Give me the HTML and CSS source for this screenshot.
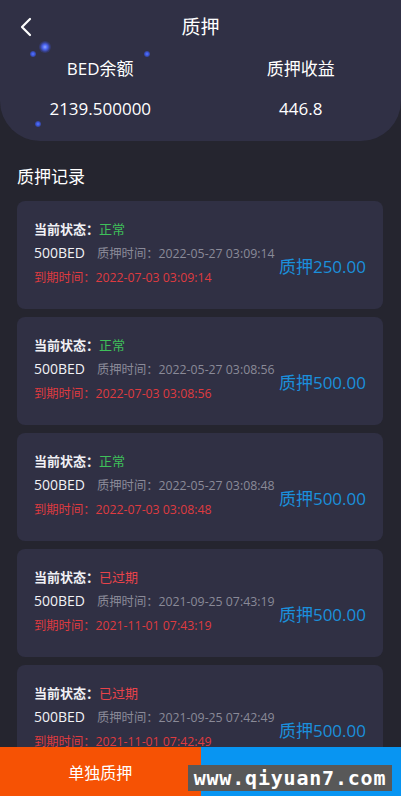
FILE: index.html
```html
<!DOCTYPE html>
<html lang="zh">
<head>
<meta charset="utf-8">
<title>质押</title>
<link rel="stylesheet" href="styles.css">
</head>
<body>
<div class="page">
  <header class="header">
    <span class="star star-big s1"></span>
    <span class="star s2"></span>
    <span class="star s3"></span>
    <span class="star s4"></span>
    <div class="topbar">
      <svg class="back" width="14" height="20" viewBox="0 0 14 20"><path d="M11 2 L3 10 L11 18" fill="none" stroke="#fff" stroke-width="2.2" stroke-linecap="round" stroke-linejoin="round"/></svg>
      <h1 class="title">质押</h1>
    </div>
    <div class="stats">
      <div class="stat">
        <div class="stat-label">BED余额</div>
        <div class="stat-value">2139.500000</div>
      </div>
      <div class="stat">
        <div class="stat-label">质押收益</div>
        <div class="stat-value">446.8</div>
      </div>
    </div>
  </header>

  <h2 class="section-title">质押记录</h2>

  <div class="list">
    <div class="card">
      <div class="info">
        <div class="line status">当前状态：<span class="ok">正常</span></div>
        <div class="line"><span class="qty">500BED</span><span class="time">质押时间：2022-05-27 03:09:14</span></div>
        <div class="line expire">到期时间：2022-07-03 03:09:14</div>
      </div>
      <div class="amount">质押250.00</div>
    </div>
    <div class="card">
      <div class="info">
        <div class="line status">当前状态：<span class="ok">正常</span></div>
        <div class="line"><span class="qty">500BED</span><span class="time">质押时间：2022-05-27 03:08:56</span></div>
        <div class="line expire">到期时间：2022-07-03 03:08:56</div>
      </div>
      <div class="amount">质押500.00</div>
    </div>
    <div class="card">
      <div class="info">
        <div class="line status">当前状态：<span class="ok">正常</span></div>
        <div class="line"><span class="qty">500BED</span><span class="time">质押时间：2022-05-27 03:08:48</span></div>
        <div class="line expire">到期时间：2022-07-03 03:08:48</div>
      </div>
      <div class="amount">质押500.00</div>
    </div>
    <div class="card">
      <div class="info">
        <div class="line status">当前状态：<span class="bad">已过期</span></div>
        <div class="line"><span class="qty">500BED</span><span class="time">质押时间：2021-09-25 07:43:19</span></div>
        <div class="line expire">到期时间：2021-11-01 07:43:19</div>
      </div>
      <div class="amount">质押500.00</div>
    </div>
    <div class="card">
      <div class="info">
        <div class="line status">当前状态：<span class="bad">已过期</span></div>
        <div class="line"><span class="qty">500BED</span><span class="time">质押时间：2021-09-25 07:42:49</span></div>
        <div class="line expire">到期时间：2021-11-01 07:42:49</div>
      </div>
      <div class="amount">质押500.00</div>
    </div>
  </div>

  <footer class="bottom">
    <button class="btn btn-orange">单独质押</button>
    <button class="btn btn-blue"></button>
  </footer>
  <div class="watermark">www.qiyuan7.com</div>
</div>
</body>
</html>
```

FILE: styles.css
```css
* { box-sizing: border-box; }
html, body {
  margin: 0;
  padding: 0;
  background: #25252f;
  font-family: "Open Sans", "Noto Sans CJK SC", sans-serif;
  color: #fff;
}
.page {
  width: 401px;
  height: 796px;
  overflow: hidden;
  position: relative;
}
.header {
  position: relative;
  height: 141px;
  background: #303045;
  border-radius: 0 0 40px 40px;
}
.star {
  position: absolute;
  width: 6px;
  height: 6px;
  border-radius: 50%;
  background: radial-gradient(circle, #5a78ff 0%, #3b55d8 40%, rgba(59,85,216,0) 100%);
}
.star-big {
  width: 12px;
  height: 12px;
  background: radial-gradient(circle, #8fa6ff 0%, #4a63f0 30%, rgba(60,80,220,0.3) 60%, rgba(60,80,220,0) 100%);
}
.s1 { left: 39px; top: 41px; }
.s2 { left: 30px; top: 51px; }
.s3 { left: 144px; top: 51px; }
.s4 { left: 35px; top: 121px; }
.topbar {
  height: 54px;
  display: flex;
  align-items: center;
  justify-content: center;
  position: relative;
}
.back {
  position: absolute;
  left: 19px;
  top: 17px;
}
.title {
  margin: 0;
  font-size: 19px;
  font-weight: 400;
  line-height: 24px;
  margin-top: -1px;
}
.stats {
  display: grid;
  grid-template-columns: 1fr 1fr;
}
.stat {
  display: flex;
  flex-direction: column;
  align-items: center;
}
.stat-label {
  font-size: 17px;
  line-height: 24px;
  margin-top: 3px;
}
.stat-value {
  font-size: 17px;
  line-height: 24px;
  margin-top: 16px;
}
.section-title {
  margin: 24px 0 0 17px;
  font-size: 17px;
  font-weight: 400;
  line-height: 24px;
  height: 24px;
}
.list {
  padding: 12px 18px 0 17px;
  display: flex;
  flex-direction: column;
  gap: 8px;
}
.card {
  height: 108px;
  border-radius: 8px;
  background: #303044;
  display: flex;
  align-items: center;
  justify-content: space-between;
  padding: 0 17px;
}
.info {
  display: flex;
  flex-direction: column;
  margin-top: -3px;
}
.line {
  line-height: 24.5px;
  height: 24.5px;
  font-size: 12.3px;
  white-space: nowrap;
}
.status {
  font-size: 13px;
  font-weight: 700;
  color: #f0f0f4;
}
.status .ok { color: #3fc05a; font-weight: 400; }
.status .bad { color: #e8434a; font-weight: 400; }
.qty {
  font-size: 14px;
  color: #f2f2f6;
  margin-right: 12px;
}
.time {
  color: #8a8a98;
  font-size: 12.3px;
}
.expire {
  color: #df3b40;
}
.amount {
  color: #1b8fdb;
  font-size: 17px;
  margin-top: 20px;
  white-space: nowrap;
}
.bottom {
  position: absolute;
  left: 0;
  right: 0;
  bottom: 0;
  height: 49px;
  display: flex;
}
.btn {
  flex: 1;
  border: 0;
  margin: 0;
  font-family: inherit;
  font-size: 16px;
  color: #fff;
}
.btn-orange { background: #f65204; }
.btn-blue { background: #0895f2; }
.watermark {
  position: absolute;
  left: 188px;
  top: 765px;
  width: 204px;
  height: 26px;
  background: #585858;
  color: #fff;
  font-family: "DejaVu Sans Mono", "Liberation Mono", monospace;
  font-weight: 700;
  font-size: 20px;
  line-height: 26px;
  text-align: center;
  letter-spacing: 0.8px;
}
```
